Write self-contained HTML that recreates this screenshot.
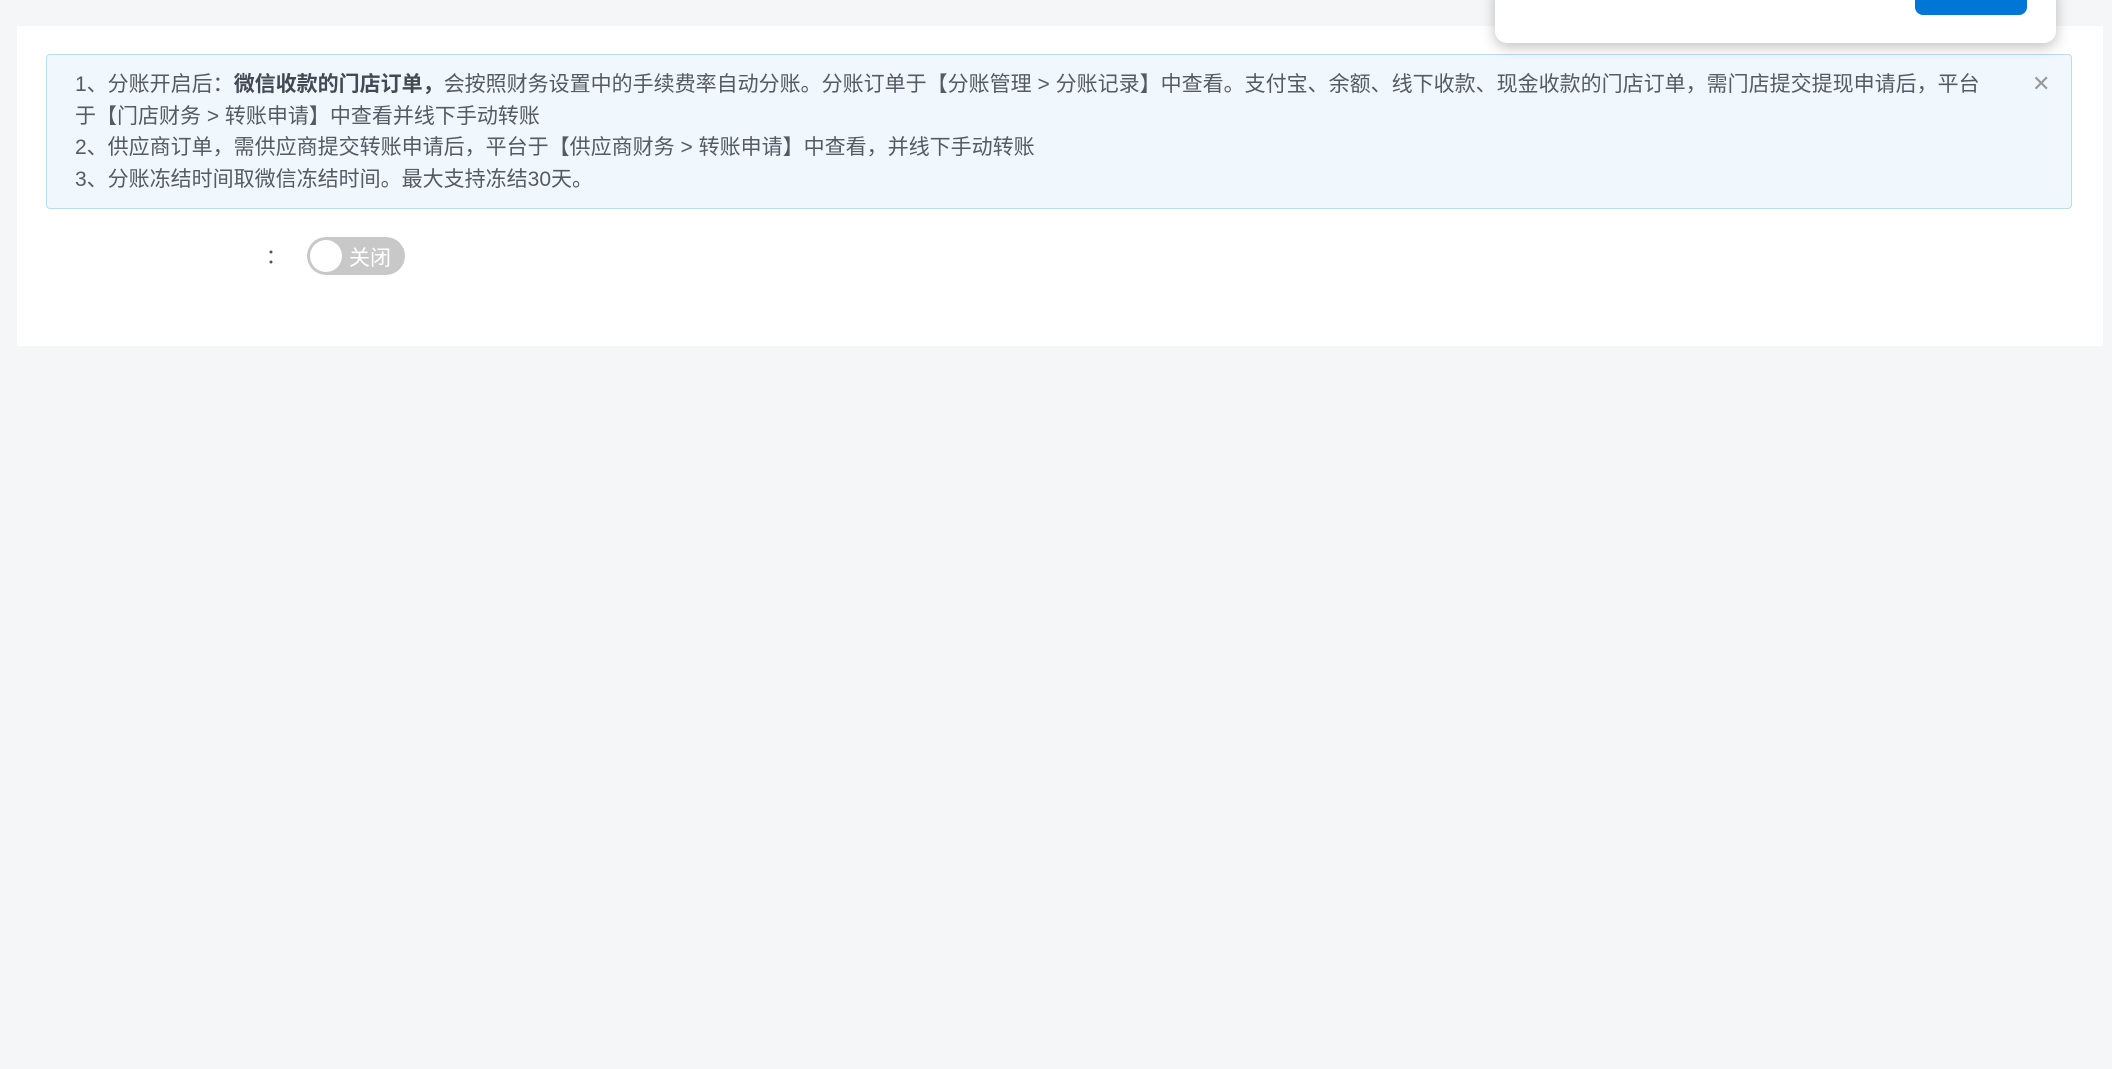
<!DOCTYPE html>
<html><head><meta charset="utf-8"><style>
html,body{margin:0;padding:0;width:2112px;height:1069px;background:#f5f6f8;overflow:hidden;font-family:"Liberation Sans","Noto Sans CJK SC",sans-serif;}
.card{position:absolute;left:17px;top:26px;width:2086px;height:320px;background:#fff;}
.alert{position:absolute;left:46px;top:54px;width:2026px;height:155px;background:#f0f8fe;border:1px solid #b8dcf5;border-radius:4px;box-sizing:border-box;}
.txt{position:absolute;left:28px;top:14px;width:1905px;font-size:21px;line-height:31.5px;color:#555a63;}
.txt b{color:#444a55;}
.close{position:absolute;left:1985px;top:16px;font-size:22px;color:#999;}
.colon{position:absolute;left:266px;top:240px;font-size:20px;color:#555;}
.sw{position:absolute;left:307px;top:237px;width:98px;height:38px;border-radius:19px;background:#c8c8c8;}
.knob{position:absolute;left:3px;top:3px;width:32px;height:32px;border-radius:50%;background:#fff;}
.sw span{position:absolute;left:42px;top:5px;font-size:21px;color:#fff;}
.dlg{position:absolute;left:1495px;top:-20px;width:561px;height:63px;background:#fff;border-radius:12px;box-shadow:0 4px 14px rgba(0,0,0,.25);}
.btn{position:absolute;left:420px;top:0;width:112px;height:35px;background:#0076d6;border-radius:0 0 8px 8px;}
</style></head><body>
<div class="card">
</div>
<div class="alert">
<div class="txt">1、分账开启后：<b>微信收款的门店订单，</b>会按照财务设置中的手续费率自动分账。分账订单于【分账管理 &gt; 分账记录】中查看。支付宝、余额、线下收款、现金收款的门店订单，需门店提交提现申请后，平台<br>于【门店财务 &gt; 转账申请】中查看并线下手动转账<br>2、供应商订单，需供应商提交转账申请后，平台于【供应商财务 &gt; 转账申请】中查看，并线下手动转账<br>3、分账冻结时间取微信冻结时间。最大支持冻结30天。</div>
<div class="close">✕</div>
</div>
<div class="colon">：</div>
<div class="sw"><div class="knob"></div><span>关闭</span></div>
<div class="dlg"><div class="btn"></div></div>
</body></html>
